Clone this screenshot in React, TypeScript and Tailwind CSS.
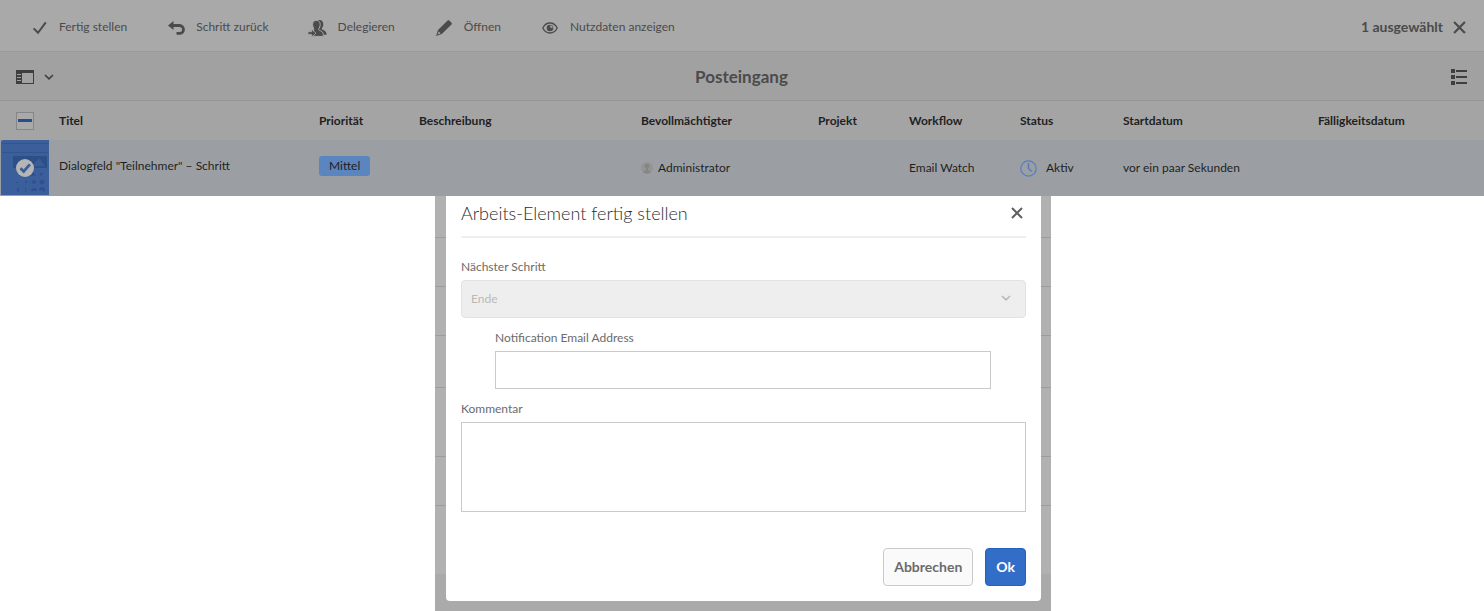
import type { ReactNode } from 'react';

const columns = [
  { label: 'Titel', width: 'w-[260px]' },
  { label: 'Priorität', width: 'w-[100px]' },
  { label: 'Beschreibung', width: 'w-[222px]' },
  { label: 'Bevollmächtigter', width: 'w-[177px]' },
  { label: 'Projekt', width: 'w-[91px]' },
  { label: 'Workflow', width: 'w-[111px]' },
  { label: 'Status', width: 'w-[103px]' },
  { label: 'Startdatum', width: 'w-[195px]' },
  { label: 'Fälligkeitsdatum', width: '' },
];

function CheckIcon() {
  return (
    <svg className="size-4" viewBox="0 0 16 16" fill="none" stroke="currentColor" strokeWidth="2">
      <path d="M2.600 8.400 7 12.800 14.800 2.400" />
    </svg>
  );
}

function BackIcon() {
  return (
    <svg className="h-[14px] w-[17px]" viewBox="0 0 17 14">
      <path d="M0 4.500 5.500 0v9z" fill="currentColor" />
      <path d="M4 4.500h7.600a3.900 3.900 0 0 1 0 7.800H8.500" fill="none" stroke="currentColor" strokeWidth="2.800" />
    </svg>
  );
}

function DelegateIcon() {
  return (
    <svg className="h-[17px] w-[19px]" viewBox="0 0 19 17" fill="currentColor">
      <path d="M11.500 0c2.400 0 3.800 1.700 3.800 4.200 0 1.700-.6 3-1.400 3.900-.4.500-.2 1.200.4 1.500 1.900.8 4.200 1.800 4.200 4.500v.7H9V0z" />
      <path
        d="M5.600 8.200C5 7.300 4.600 6 4.600 4.600 4.600 1.900 6 .4 8.400.4s3.800 1.500 3.800 4.200c0 1.800-.6 3.200-1.400 4.100-.4.500-.2 1.200.4 1.500 1.900.8 4.100 1.700 4.100 4.400v1.800H5.600z"
        stroke="#a9a9a9"
        strokeWidth="1"
      />
      <path d="M0 11.700h3.600V9.200l4.400 4-4.400 3.800v-2.600H0z" stroke="#a9a9a9" strokeWidth=".8" />
    </svg>
  );
}

function PencilIcon() {
  return (
    <svg className="size-4" viewBox="0 0 16 16" fill="currentColor">
      <path d="M11.600.5c.5-.5 1.200-.5 1.700 0l2.200 2.200c.5.500.5 1.200 0 1.700l-9.700 9.500L0 16l2-6zM2.800 11.400l-1.200 3.200 3-1.300z" fillRule="evenodd" />
    </svg>
  );
}

function EyeIcon() {
  return (
    <svg className="h-3 w-4" viewBox="0 0 16 12" fill="none" stroke="currentColor">
      <path d="M.8 6C2.300 3 4.900 1 8 1s5.700 2 7.200 5C13.700 9 11.100 11 8 11S2.300 9 .8 6z" strokeWidth="1.300" />
      <circle cx="8" cy="6" r="3.300" fill="currentColor" stroke="none" />
      <path d="M8.300 3.200A2.600 2.600 0 0 1 10.800 5.700H8.300z" fill="#a9a9a9" stroke="none" />
    </svg>
  );
}

function CloseIcon({ className }: { className: string }) {
  return (
    <svg className={className} viewBox="0 0 12 12" fill="none" stroke="currentColor" strokeWidth="2">
      <path d="m1 1 10 10M11 1 1 11" />
    </svg>
  );
}

function ChevronIcon({ className }: { className: string }) {
  return (
    <svg className={className} viewBox="0 0 10 6" fill="none" stroke="currentColor" strokeWidth="1.600">
      <path d="m1 1 4 3.800L9 1" />
    </svg>
  );
}

function RailIcon() {
  return (
    <svg className="h-[14px] w-[18px]" viewBox="0 0 18 14">
      <path d="M0 0h18v14H0zM6 3v10h11V3z" fill="currentColor" fillRule="evenodd" />
      <path d="M1 4h4v1H1zM1 7h4v1H1zM1 10h4v1H1z" fill="#a1a1a1" />
    </svg>
  );
}

function ListIcon() {
  return (
    <svg className="size-4" viewBox="0 0 16 16" fill="currentColor">
      <path d="M0 0h4v4H0zM0 6h4v4H0zM0 12h4v4H0zM5 1h11v2H5zM5 7h11v2H5zM5 13h11v2H5z" />
    </svg>
  );
}

function Thumbnail() {
  return (
    <svg className="ml-px block h-[55px] w-12" viewBox="0 0 48 55">
      <path d="M2 0h46v55H0V2a2 2 0 0 1 2-2z" fill="#3a5f9b" />
      <path d="M1 3h47v1H1zM1 12h47v1H1z" fill="#33558d" />
      <path d="M12 16h34v12H12z" fill="#2c4f88" />
      <path d="m20 27 7-6 5 4 6-7 6 8z" fill="#3a5c94" />
      <g fill="#2f5093">
        <path d="M29 36l3-4 3 4zM38 35l3-3 1 2-2 2zM15 42h2v1h-2zM24 41h2v2h-2z" />
        <circle cx="33" cy="42" r="2" />
        <path d="m41 39 3 3-3 3-3-3zM15 51l3-4v5zM24 47h1v5h-1zM30 51a3 3 0 0 1 6 0zM38 50a3 3 0 0 1 6 0l-1 2-2-2-2 1z" />
      </g>
      <circle cx="24" cy="28" r="9" fill="#b5b5b6" />
      <path d="m19.500 28.300 3.200 3.200 6.200-7.200" fill="none" stroke="#3a5f9b" strokeWidth="2.800" />
    </svg>
  );
}

function Action({ icon, children }: { icon: ReactNode; children: ReactNode }) {
  return (
    <button type="button" className="flex items-center gap-[10px]">
      <span className="flex h-6 w-5 items-center justify-center pt-[2px]">{icon}</span>
      <span>{children}</span>
    </button>
  );
}

const backdropRows = ['h-[42px]', 'h-[49px]', 'h-[49px]', 'h-[52px]', 'h-[69px]', 'h-[49px]'];

export default function App() {
  return (
    <div className="bg-white font-['Lato',sans-serif] text-xs text-[#4b4b4b]">
      <header className="flex h-[52px] items-center justify-between border-b border-[#989898] bg-[#a9a9a9] pt-[3px] pr-[18px] pl-[29px]">
        <div className="flex items-center gap-[39px]">
          <Action icon={<CheckIcon />}>Fertig stellen</Action>
          <Action icon={<BackIcon />}>Schritt zurück</Action>
          <Action icon={<DelegateIcon />}>Delegieren</Action>
          <Action icon={<PencilIcon />}>Öffnen</Action>
          <Action icon={<EyeIcon />}>Nutzdaten anzeigen</Action>
        </div>
        <button type="button" className="flex items-center gap-[10px] text-sm font-bold">
          1 ausgewählt
          <CloseIcon className="size-[13px]" />
        </button>
      </header>

      <div className="grid h-[49px] grid-cols-[1fr_auto_1fr] items-center border-b border-[#959595] bg-[#a1a1a1] pt-px pr-[17px] pl-4">
        <button type="button" aria-label="Seitenleiste" className="flex items-center gap-[10px] text-[#3e3e3e]">
          <RailIcon />
          <ChevronIcon className="h-[6px] w-[10px]" />
        </button>
        <h1 className="text-[17px] leading-6 font-bold">Posteingang</h1>
        <button type="button" aria-label="Listenansicht" className="justify-self-end text-[#3e3e3e]">
          <ListIcon />
        </button>
      </div>

      <table className="w-full table-fixed border-collapse text-left text-[#1f1f1f]">
        <thead>
          <tr className="h-[39px] bg-[#a4a4a4]">
            <th className="w-[59px] p-0 pl-4">
              <button type="button" aria-label="Auswahl umschalten" className="flex size-[18px] items-center justify-center border border-[#868686] bg-[#a9a9a9]">
                <span className="h-[3px] w-[14px] bg-[#244f90]" />
              </button>
            </th>
            {columns.map((column) => (
              <th key={column.label} className={`p-0 font-bold ${column.width}`}>
                {column.label}
              </th>
            ))}
          </tr>
        </thead>
        <tbody>
          <tr className="h-14 bg-[#9b9fa4]">
            <td className="p-0 align-top">
              <Thumbnail />
            </td>
            <td className="p-0 pb-1">Dialogfeld "Teilnehmer" – Schritt</td>
            <td className="p-0 pb-1">
              <span className="inline-flex h-5 items-center rounded-[3px] bg-[#5b85bf] px-[10px]">Mittel</span>
            </td>
            <td className="p-0" />
            <td className="p-0">
              <span className="flex items-center gap-[5px]">
                <svg className="size-3" viewBox="0 0 12 12">
                  <circle cx="6" cy="6" r="6" fill="#949494" />
                  <path d="M6 2a2 2 0 0 1 1 4v2l3 2a6 6 0 0 1-8 0l3-2V6a2 2 0 0 1 1-4z" fill="#858585" />
                </svg>
                Administrator
              </span>
            </td>
            <td className="p-0" />
            <td className="p-0">Email Watch</td>
            <td className="p-0">
              <span className="flex items-center gap-[9px]">
                <svg className="size-[17px]" viewBox="0 0 17 17" fill="none" stroke="#547fbc">
                  <circle cx="8.500" cy="8.500" r="7.700" strokeWidth="1.200" />
                  <path d="M8.500 3v5.500l3.200 3" strokeWidth="1.600" />
                </svg>
                Aktiv
              </span>
            </td>
            <td className="p-0">vor ein paar Sekunden</td>
            <td className="p-0" />
          </tr>
        </tbody>
      </table>

      <div className="pl-[2px]">
        <div className="mx-auto grid w-full max-w-[616px] bg-[#aaaaaa]">
          <div aria-hidden="true" className="col-start-1 row-start-1">
            {backdropRows.map((height, index) => (
              <div key={index} className={`border-b border-[#9d9d9d] bg-[#b1b1b1] ${height}`} />
            ))}
            <div className="h-[68px] bg-[#b1b1b1]" />
          </div>

          <form
            role="dialog"
            aria-labelledby="dialog-title"
            onSubmit={(event) => event.preventDefault()}
            className="col-start-1 row-start-1 mr-[10px] mb-[10px] ml-[11px] flex flex-col rounded-b-[4px] bg-white px-[15px] pb-[15px] text-[#6b6b6b]"
          >
            <div className="flex h-[42px] items-center justify-between border-b-2 border-[#efefef] pr-[3px] pb-[6px]">
              <h2 id="dialog-title" className="text-lg font-light text-[#2d2d2d]">
                Arbeits-Element fertig stellen
              </h2>
              <button type="button" aria-label="Schließen" className="text-[#606060]">
                <CloseIcon className="size-3" />
              </button>
            </div>

            <label htmlFor="next-step" className="mt-5 mb-1 leading-[18px]">
              Nächster Schritt
            </label>
            <div className="relative">
              <select
                id="next-step"
                disabled
                className="block h-[38px] w-full appearance-none rounded-[4px] border border-[#e2e2e2] bg-[#eeeeee] px-[9px] text-[#b9b9b9] opacity-100"
              >
                <option>Ende</option>
              </select>
              <ChevronIcon className="pointer-events-none absolute top-[15px] right-[15px] h-[6px] w-[10px] text-[#b9b9b9]" />
            </div>

            <div className="mt-[11px] mr-[35px] ml-[34px] flex flex-col">
              <label htmlFor="email" className="mb-1 leading-[18px]">
                Notification Email Address
              </label>
              <input id="email" type="text" className="h-[38px] border border-[#cacaca] bg-white px-[10px]" />
            </div>

            <label htmlFor="comment" className="mt-[11px] mb-1 leading-[18px]">
              Kommentar
            </label>
            <textarea id="comment" className="block h-[90px] resize-none border border-[#cacaca] bg-white p-[10px]" />

            <div className="mt-9 flex justify-end gap-3 text-sm font-bold">
              <button type="button" className="h-[38px] rounded-[4px] border border-[#cacaca] bg-[#fafafa] px-[10px]">
                Abbrechen
              </button>
              <button type="submit" className="h-[38px] rounded-[4px] border border-[#2361bd] bg-[#326ec8] px-[10px] text-white">
                Ok
              </button>
            </div>
          </form>
        </div>
      </div>
    </div>
  );
}
